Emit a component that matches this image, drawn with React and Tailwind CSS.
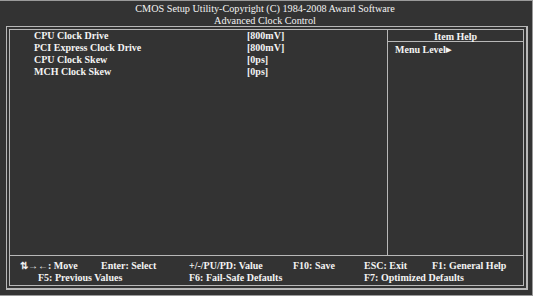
import React from 'react';

// Award BIOS style "Advanced Clock Control" screen

const items = [
  { label: 'CPU Clock Drive', value: '[800mV]' },
  { label: 'PCI Express Clock Drive', value: '[800mV]' },
  { label: 'CPU Clock Skew', value: '[0ps]' },
  { label: 'MCH Clock Skew', value: '[0ps]' },
];

const App = () => {
  return (
    <div
      className="w-[533px] h-[296px] bg-[#333333] text-[#f4f4f4] border-t border-r border-b border-[#9a9a9a] overflow-hidden"
      style={{ fontFamily: '"Liberation Serif", "Times New Roman", serif' }}
    >
      <div className="h-[25px] text-[10.2px] leading-[12px] text-center pt-[2px] pr-[2px]">
        <div>CMOS Setup Utility-Copyright (C) 1984-2008 Award Software</div>
        <div>Advanced Clock Control</div>
      </div>

      <div className="ml-[6px] w-[522px] h-[264px] border border-r-2 border-b-2 border-[#b8b8b8] p-[2px]">
        <div className="w-full h-full border border-[#b8b8b8] flex flex-col text-[10px] leading-[12px] font-bold">
          <div className="flex h-[226px] border-b border-[#b8b8b8]">
            {/* main list */}
            <div className="w-[378px] border-r border-[#b8b8b8]">
              {items.map((it) => (
                <div key={it.label} className="flex">
                  <span className="ml-[24px] w-[213px]">{it.label}</span>
                  <span>{it.value}</span>
                </div>
              ))}
            </div>
            {/* help pane */}
            <div className="flex-1">
              <div className="h-[12px] leading-[13px] border-b border-[#b8b8b8] text-center">
                Item Help
              </div>
              <div className="pl-[7px] pt-[2px] flex items-center">
                Menu Level<span className="text-[7px] leading-[12px]">▶</span>
              </div>
            </div>
          </div>

          {/* key legend */}
          <div className="grid grid-cols-[81px_88px_104px_71px_68px_1fr] pl-[10px] pt-[4px]">
            <span>⇅→←: Move</span>
            <span>Enter: Select</span>
            <span>+/-/PU/PD: Value</span>
            <span>F10: Save</span>
            <span>ESC: Exit</span>
            <span>F1: General Help</span>
            <span className="col-span-2 pl-[18px]">F5: Previous Values</span>
            <span className="col-span-2">F6: Fail-Safe Defaults</span>
            <span className="col-span-2">F7: Optimized Defaults</span>
          </div>
        </div>
      </div>
    </div>
  );
};

export default App;
